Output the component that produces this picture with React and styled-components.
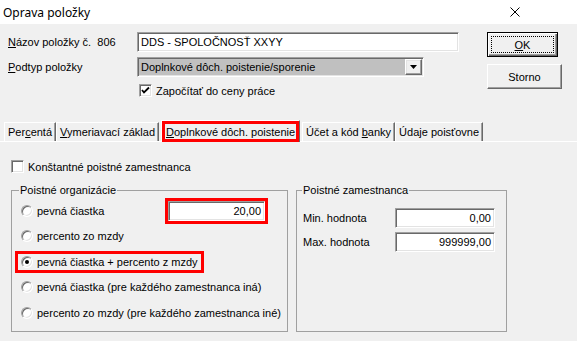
import React from 'react'
import styled, { createGlobalStyle } from 'styled-components'

const GlobalStyle = createGlobalStyle`
  *, *::before, *::after { box-sizing: border-box; }
  html, body { margin: 0; padding: 0; background: #f0f0f0; }
  body {
    font-family: "Liberation Sans", Arial, sans-serif;
    font-size: 11px;
    color: #000;
  }
`

// okno
const Window = styled.div`
  width: 577px;
  height: 341px;
  overflow: hidden;
  background: #f0f0f0;
`

const TitleBar = styled.div`
  height: 24px;
  background: #fff;
  display: flex;
  align-items: center;
  justify-content: space-between;
  padding: 0 57px 0 3px;
  font-family: "Noto Sans", "Open Sans", sans-serif;
  font-size: 12px;
`

const Top = styled.div`
  display: flex;
  align-items: flex-start;
  height: 73px;
  padding: 8px 0 0 8px;
`

const Form = styled.div`
  display: grid;
  grid-template-columns: 129px 322px;
  grid-template-rows: 20px 20px 15px;
  row-gap: 5px;
  align-items: center;
`

const Label = styled.span`
  white-space: pre;
`

const Sunken = styled.div`
  height: 20px;
  width: ${p => p.$w || 'auto'};
  border: 1px solid;
  border-color: #a0a0a0 #fff #fff #a0a0a0;
  box-shadow: inset 1px 1px 0 #696969, inset -1px -1px 0 #e3e3e3;
  background: ${p => p.$bg || '#fff'};
  display: flex;
  align-items: center;
  justify-content: ${p => (p.$right ? 'flex-end' : 'flex-start')};
  padding: ${p => (p.$right ? '0 3px 0 0' : '0 0 0 3px')};
  white-space: nowrap;
  outline: ${p => (p.$mark ? '3px solid #f00' : 'none')};
`

const Select = styled(Sunken)`
  width: 287px;
  padding: 0 1px 0 3px;
  justify-content: space-between;
`

const DropBtn = styled.div`
  width: 17px;
  height: 16px;
  border: 1px solid;
  border-color: #fff #696969 #696969 #fff;
  box-shadow: inset -1px -1px 0 #a0a0a0, inset 1px 1px 0 #e3e3e3;
  background: #f0f0f0;
  display: flex;
  align-items: center;
  justify-content: center;
`

const CheckRow = styled.label`
  display: flex;
  align-items: center;
  gap: 4px;
  align-self: end;
  padding-left: ${p => p.$indent || 0}px;
`

const Box = styled.span`
  width: 13px;
  height: 13px;
  flex: none;
  border: 1px solid;
  border-color: #a0a0a0 #fff #fff #a0a0a0;
  box-shadow: inset 1px 1px 0 #696969, inset -1px -1px 0 #e3e3e3;
  background: #fff;
  display: flex;
  align-items: center;
  justify-content: center;
`

const Buttons = styled.div`
  margin-left: 28px;
  display: flex;
  flex-direction: column;
  gap: 7px;
`

const Button = styled.div`
  width: ${p => p.$w}px;
  height: 25px;
  display: flex;
  align-items: center;
  justify-content: center;
  background: #f0f0f0;
  border: 1px solid;
  border-color: ${p => (p.$default ? '#000' : '#fff #696969 #696969 #fff')};
  box-shadow: ${p =>
    p.$default
      ? 'inset 1px 1px 0 #fff, inset -1px -1px 0 #696969, inset -2px -2px 0 #a0a0a0'
      : 'inset -1px -1px 0 #a0a0a0'};
  padding: 3px;
`

const Focus = styled.div`
  width: 100%;
  height: 100%;
  border: 1px dotted #000;
  display: flex;
  align-items: center;
  justify-content: center;
`

// zalozky
const TabStrip = styled.div`
  margin-top: 23px;
  height: 22px;
  display: flex;
  align-items: flex-end;
  padding-left: 4px;
  border-bottom: 1px solid #fff;
`

const Tab = styled.div`
  height: ${p => (p.$active ? 22 : 19)}px;
  margin: 0 ${p => (p.$active ? '2px' : '0')} ${p => (p.$active ? '-1px' : '0')};
  padding: 0 ${p => (p.$active ? 4 : 3)}px;
  display: flex;
  align-items: center;
  white-space: nowrap;
  border-top: 1px solid #fff;
  border-left: 1px solid #fff;
  border-right: 1px solid #696969;
  background: #f0f0f0;
  box-shadow: ${p => (p.$active ? 'inset 0 0 0 3px #f00' : 'inset -1px 0 0 #a0a0a0')};
`

const Panel = styled.div`
  padding: 18px 0 0 11px;
`

const Groups = styled.div`
  display: flex;
  gap: 8px;
  margin-top: 11px;
`

const Group = styled.fieldset`
  margin: 0;
  width: ${p => p.$w}px;
  height: 148px;
  border: 1px solid #a0a0a0;
  padding: ${p => p.$pad};
  min-width: 0;
`

const Legend = styled.legend`
  padding: 0 1px;
  margin-left: ${p => p.$ml}px;
  line-height: 13px;
`

const Options = styled.div`
  display: flex;
  flex-direction: column;
`

const OptionRow = styled.div`
  height: 25.5px;
  display: flex;
  align-items: center;
  justify-content: space-between;
`

const Option = styled.label`
  display: inline-flex;
  align-items: center;
  gap: 4px;
  white-space: nowrap;
  padding: 2px 3px;
  margin-left: -3px;
  outline: ${p => (p.$mark ? '3px solid #f00' : 'none')};
`

const Radio = styled.span`
  width: 12px;
  height: 12px;
  flex: none;
  border-radius: 50%;
  border: 1px solid;
  border-color: #a0a0a0 #fff #fff #a0a0a0;
  box-shadow: inset 1px 1px 0 #696969, inset -1px -1px 0 #e3e3e3;
  background: #fff;
  display: flex;
  align-items: center;
  justify-content: center;
  &::after {
    content: '';
    width: 4px;
    height: 4px;
    border-radius: 50%;
    background: ${p => (p.$checked ? '#000' : 'transparent')};
  }
`

const Limits = styled.div`
  display: grid;
  grid-template-columns: 92px 100px;
  grid-auto-rows: 20px;
  row-gap: 4px;
  align-items: center;
`

const options = [
  'pevná čiastka',
  'percento zo mzdy',
  'pevná čiastka + percento z mzdy',
  'pevná čiastka (pre každého zamestnanca iná)',
  'percento zo mzdy (pre každého zamestnanca iné)',
]

const tabs = [
  <>Per<u>c</u>entá</>,
  <><u>V</u>ymeriavací základ</>,
  <><u>D</u>oplnkové dôch. poistenie</>,
  <>Účet a kód <u>b</u>anky</>,
  <>Údaje poisťovne</>,
]

function App() {
  return (
    <Window>
      <GlobalStyle />
      <TitleBar>
        <span>Oprava položky</span>
        <svg width="10" height="10" viewBox="0 0 10 10">
          <path d="M0.5 0.5 L9.5 9.5 M9.5 0.5 L0.5 9.5" stroke="#000" strokeWidth="1" />
        </svg>
      </TitleBar>

      <Top>
        <Form>
          <Label><u>N</u>ázov položky č.  806</Label>
          <Sunken>DDS - SPOLOČNOSŤ XXYY</Sunken>
          <Label><u>P</u>odtyp položky</Label>
          <Select $bg="#c0c0c0">
            <span>Doplnkové dôch. poistenie/sporenie</span>
            <DropBtn>
              <svg width="7" height="4" viewBox="0 0 7 4">
                <path d="M0 0 H7 L3.5 4 Z" fill="#000" />
              </svg>
            </DropBtn>
          </Select>
          <span />
          <CheckRow $indent={2}>
            <Box>
              <svg width="9" height="9" viewBox="0 0 9 9">
                <path d="M1 4 L3 6.5 L8 1.5" stroke="#000" strokeWidth="1.8" fill="none" />
              </svg>
            </Box>
            <span>Započítať do ceny práce</span>
          </CheckRow>
        </Form>
        <Buttons>
          <Button $w={71} $default>
            <Focus><span><u>O</u>K</span></Focus>
          </Button>
          <Button $w={75}>Storno</Button>
        </Buttons>
      </Top>

      <TabStrip>
        {tabs.map((t, i) => (
          <Tab key={i} $active={i === 2}><span>{t}</span></Tab>
        ))}
      </TabStrip>

      <Panel>
        <CheckRow>
          <Box />
          <span>Konštantné poistné zamestnanca</span>
        </CheckRow>

        <Groups>
          <Group $w={277} $pad="1px 22px 0 9px">
            <Legend $ml={-2}>Poistné organizácie</Legend>
            <Options>
              {options.map((o, i) => (
                <OptionRow key={o}>
                  <Option $mark={i === 2}>
                    <Radio $checked={i === 2} />
                    <span>{o}</span>
                  </Option>
                  {i === 0 && <Sunken $w="97px" $right $mark>20,00</Sunken>}
                </OptionRow>
              ))}
            </Options>
          </Group>

          <Group $w={211} $pad="11px 0 0 6px">
            <Legend $ml={-1}>Poistné zamestnanca</Legend>
            <Limits>
              <span>Min. hodnota</span>
              <Sunken $right>0,00</Sunken>
              <span>Max. hodnota</span>
              <Sunken $right>999999,00</Sunken>
            </Limits>
          </Group>
        </Groups>
      </Panel>
    </Window>
  )
}

export default App
